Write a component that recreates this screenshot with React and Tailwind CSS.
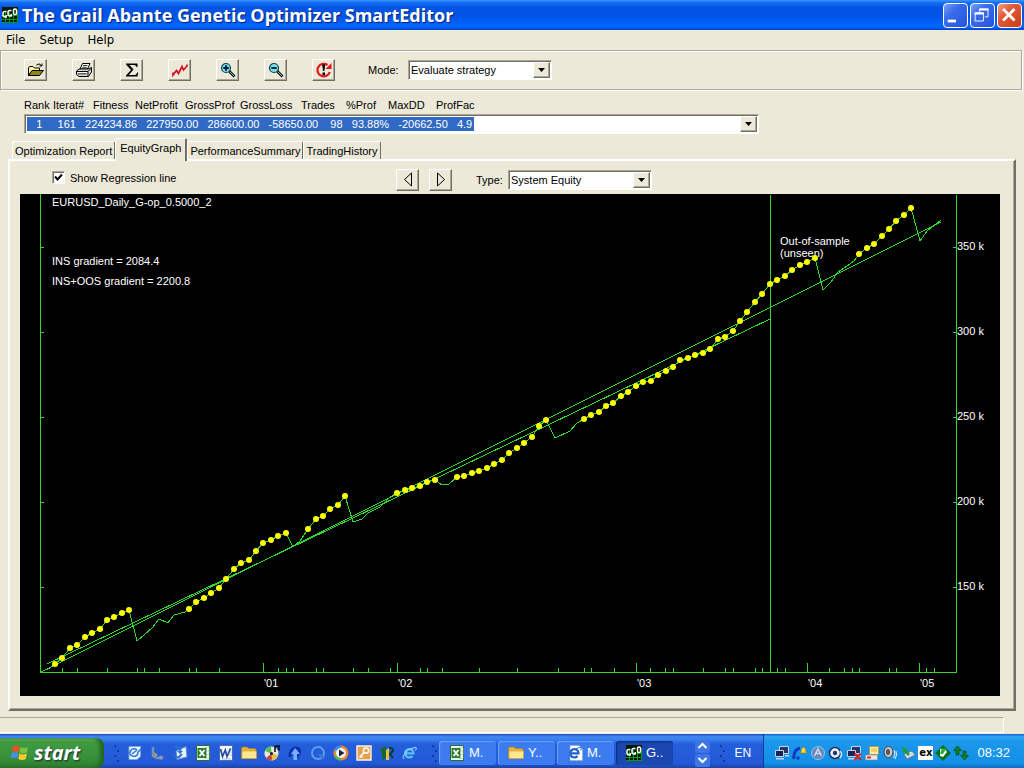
import React, { useState } from "react";

const RAISED =
  "border border-t-white border-l-white border-r-[#716f64] border-b-[#716f64] shadow-[inset_-1px_-1px_0_#aca899]";
const SUNKEN =
  "border border-t-[#aca899] border-l-[#aca899] border-r-white border-b-white shadow-[inset_1px_1px_0_#716f64]";

/* ---------- equity data: [x, y, marked] ---------- */
const EQUITY = [
  [47, 670, 0], [55, 664, 1], [62, 658, 1], [70, 648, 1], [77, 645, 1], [85, 637, 1], [92, 633, 1],
  [100, 629, 1], [107, 620, 1], [114, 617, 1], [122, 613, 1], [129, 610, 1], [137, 641, 0],
  [152, 628, 0], [159, 619, 0], [168, 623, 0], [174, 615, 0], [185, 612, 0], [189, 609, 1],
  [196, 602, 1], [204, 598, 1], [211, 593, 1], [219, 588, 1], [226, 579, 1], [234, 569, 1],
  [241, 563, 1], [249, 560, 1], [256, 551, 1], [263, 543, 1], [271, 540, 1], [278, 536, 1],
  [286, 533, 1], [293, 547, 0], [300, 541, 0], [308, 529, 1], [316, 519, 1], [323, 516, 1],
  [330, 509, 1], [338, 505, 1], [345, 496, 1], [353, 522, 0], [362, 519, 0], [368, 513, 0],
  [380, 507, 0], [390, 497, 0], [397, 493, 1], [405, 490, 1], [412, 488, 1], [420, 486, 1],
  [427, 482, 1], [435, 480, 1], [442, 485, 0], [449, 484, 0], [457, 477, 1], [464, 476, 1],
  [472, 473, 1], [479, 471, 1], [487, 468, 1], [494, 464, 1], [502, 460, 1], [509, 453, 1],
  [517, 448, 1], [524, 443, 1], [532, 437, 1], [539, 426, 1], [546, 420, 1], [555, 438, 0],
  [570, 431, 0], [577, 423, 0], [584, 419, 1], [591, 415, 1], [599, 412, 1], [606, 406, 1],
  [613, 403, 1], [621, 396, 1], [628, 392, 1], [636, 386, 1], [643, 382, 1], [651, 381, 1],
  [658, 375, 1], [666, 371, 1], [673, 367, 1], [680, 360, 1], [688, 358, 1], [695, 355, 1],
  [703, 353, 1], [710, 349, 1], [718, 339, 1], [725, 337, 1], [733, 331, 1], [740, 321, 1],
  [747, 312, 1], [755, 302, 1], [762, 294, 1], [770, 284, 1], [777, 280, 1], [785, 276, 1],
  [792, 270, 1], [800, 265, 1], [807, 262, 1], [815, 258, 1], [823, 290, 0], [831, 282, 0],
  [838, 272, 0], [847, 266, 0], [854, 261, 0], [859, 254, 1], [867, 248, 1], [874, 244, 1],
  [882, 236, 1], [889, 229, 1], [896, 221, 1], [904, 215, 1], [911, 208, 1], [920, 241, 0],
  [927, 231, 0], [941, 220, 0],
];
const MINOR = [
  62, 77, 107, 137, 144, 159, 189, 196, 219, 278, 286, 293, 316, 323, 353, 368, 390, 420, 427, 442,
  479, 517, 558, 584, 591, 614, 650, 665, 673, 703, 725, 733, 755, 762, 777, 785, 829, 844, 852,
  859, 889, 896, 926, 934,
];
const YEARS = [[263, "'01"], [397, "'02"], [636, "'03"], [807, "'04"], [919, "'05"]];
const LEVELS = [[247, "350 k"], [332, "300 k"], [417, "250 k"], [502, "200 k"], [587, "150 k"]];

function EquityChart({ regression }) {
  return (
    <svg
      viewBox="20 194 980 502"
      className="block h-auto w-full bg-black text-[11px]"
      role="img"
      aria-label="System equity graph"
    >
      <g stroke="#32d832" fill="none" shapeRendering="crispEdges" strokeWidth="1">
        <path d="M40.5 194V672.5H956.5V195M770.5 195V672" />
        {MINOR.map((x) => (
          <path key={x} d={`M${x}.5 668V672`} />
        ))}
        {YEARS.map(([x]) => (
          <path key={x} d={`M${x}.5 663V672`} />
        ))}
        {LEVELS.map(([y]) => (
          <path key={y} d={`M41 ${y}.5H44M953 ${y}.5H957`} />
        ))}
        {regression && <path d="M41 672L941 222M47 664L770 319" />}
        <polyline points={EQUITY.map(([x, y]) => `${x},${y}`).join(" ")} />
      </g>
      <g fill="#fff">
        <text x="52" y="206">EURUSD_Daily_G-op_0.5000_2</text>
        <text x="52" y="265">INS gradient = 2084.4</text>
        <text x="52" y="285">INS+OOS gradient = 2200.8</text>
        <text x="780" y="245">Out-of-sample</text>
        <text x="780" y="257">(unseen)</text>
        {LEVELS.map(([y, label]) => (
          <text key={label} x="957" y={y + 3}>{label}</text>
        ))}
        {YEARS.map(([x, label]) => (
          <text key={label} x={x + 1} y="687">{label}</text>
        ))}
      </g>
      <g fill="#ffff00">
        {EQUITY.filter((p) => p[2]).map(([x, y]) => (
          <circle key={x} cx={x} cy={y} r="3" />
        ))}
      </g>
    </svg>
  );
}

/* ---------- drawings ---------- */
function Ico({ children, size = "size-4", box = "0 0 16 16" }) {
  return (
    <svg viewBox={box} className={`${size} shrink-0`} aria-hidden="true">
      {children}
    </svg>
  );
}

const GopIcon = () => (
  <Ico>
    <path fill="#001a00" d="M0 0h16v16H0z" />
    <path stroke="#0a9a1a" strokeWidth="1" d="M0 8.500h16M0 12.500h16M0 15.500h16M3.500 5v11M7.500 5v11M11.500 5v11M15.500 3v13" />
    <g fill="none" stroke="#fff" strokeWidth="1.500">
      <path d="M4.500 4.500H2.500Q1 4.500 1 6.500V8Q1 10 3 10H4.200V8" />
      <path d="M9.500 3.500H7.500Q6 3.500 6 5.500V7Q6 9 8 9H9.200V7" />
      <rect x="11.500" y="2" width="3" height="5.500" rx="1.300" />
    </g>
  </Ico>
);

const OpenIcon = () => (
  <Ico size="h-4 w-[18px]" box="0 0 18 16">
    <path fill="#fff29a" stroke="#000" d="M1.500 13.500V5.500L3 4.500H6L7.500 6H12.500V8.500H5.500z" />
    <path fill="#8a8a12" stroke="#000" d="M1.500 13.500L5 8.500H16.500L12.500 13.500z" />
    <path fill="none" stroke="#000" d="M9.500 3Q12 .5 14.500 3.500M15 1.500V4H12.500" />
  </Ico>
);
const PrintIcon = () => (
  <Ico size="h-4 w-[18px]" box="0 0 18 16">
    <path fill="#fff" stroke="#000" d="M5 7L7.500 1.500H15L12.500 7z" />
    <path stroke="#000" strokeWidth=".8" d="M8 3.500H12.500M7.200 5.300H11.700" />
    <path fill="#d8d8d0" stroke="#000" d="M1.500 9L4 7H13L16.500 5.500V10L13.500 14.500H4L1.500 12.500z" />
    <path stroke="#000" fill="none" d="M1.500 9.500H13L16 6.500M13 9.500V14M3 11.800H11.500" />
    <path stroke="#fff" d="M3 10.700H12" />
  </Ico>
);
const SigmaIcon = () => (
  <Ico size="h-4 w-[18px]" box="0 0 18 16">
    <path fill="#000" d="M3 1.500H14.500V5H13.500Q13 3 11 3H6.500L10.500 7.500L5.800 13H11.500Q13.500 13 14.200 10.500H15.200L14.500 14.500H3V13.500L8 8L3 2.500z" />
  </Ico>
);
const ZigIcon = () => (
  <Ico size="h-4 w-[18px]" box="0 0 18 16">
    <path fill="none" stroke="#d01020" strokeWidth="1.700" d="M2 10.500V13L5.500 8.500L7.500 11.500L11 4.500L12.500 8L16 4V2.500" />
  </Ico>
);
const ZoomIcon = ({ plus }) => (
  <Ico size="h-4 w-[18px]" box="0 0 18 16">
    <path stroke="#000" strokeWidth="2.600" d="M10 9L15.500 14.500" />
    <path stroke="#5ad0c8" strokeWidth="1" d="M10.500 9.500L15 14" />
    <circle cx="7" cy="6" r="4.500" fill="#6fe3df" stroke="#1c3a4a" strokeWidth="1.200" />
    <path stroke="#00104a" strokeWidth="1.800" d={plus ? "M4.300 6H9.700M7 3.300V8.700" : "M4.300 6H9.700"} />
  </Ico>
);
const RunIcon = () => (
  <Ico size="h-4 w-[18px]" box="0 0 18 16">
    <path fill="none" stroke="#e01818" strokeWidth="2.200" d="M12.500 3A6.300 6.300 0 1 0 14.800 10" />
    <path fill="#e01818" d="M16.500 1V7H10.500z" />
    <path fill="#000" d="M7.200 2.500H10.200L9.400 9H8zM7.500 10.500H10V13H7.500z" />
  </Ico>
);

const Excel = () => (
  <Ico>
    <path fill="#e8f4e4" stroke="#2f6b35" d="M1.500 .5h13v15h-13z" />
    <path fill="#fff" stroke="#9fc49f" strokeWidth=".6" d="M10 2.500h4v11h-4zM10 6h4M10 9.500h4" />
    <path fill="#2e7d3a" d="M2.500 3h9v10h-9z" />
    <path stroke="#fff" strokeWidth="1.800" d="M4.500 5L9.500 11M9.500 5L4.500 11" />
  </Ico>
);
const Word = () => (
  <Ico>
    <path fill="#f2f6ff" stroke="#4a6cb0" d="M1.500 .5h13v15h-13z" />
    <path stroke="#9ab" strokeWidth=".7" d="M11 4h3M11 7h3M11 10h3M4 14h9" />
    <path fill="none" stroke="#24489c" strokeWidth="1.700" d="M2.500 4L4.500 11.500L7.300 5L9 11.500L12.500 3.500" />
  </Ico>
);
const Folder = () => (
  <Ico>
    <path fill="#e8b43c" stroke="#b07c14" strokeWidth=".7" d="M.5 13.500V3L1.500 2H6L7.500 3.500H14L15 4.500V13.500z" />
    <path fill="#ffe890" stroke="#c89828" strokeWidth=".6" d="M1 6H15.500V13.500H1z" />
  </Ico>
);
const IE = ({ page }) => (
  <Ico>
    {page && <path fill="#fff" stroke="#8aa" strokeWidth=".6" d="M3 .5h9L15.500 4V15.500H3z" />}
    <path fill="none" stroke={page ? "#2060c8" : "#5cc0f8"} strokeWidth="2.200" d="M4 8.300H11.500A4.200 4.200 0 1 0 10.500 11" />
    <path fill="none" stroke={page ? "#2a78d8" : "#a8e0ff"} strokeWidth="1" d="M2.500 13.500Q-.5 14 2.500 9T13 2.500Q15.500 2 13.500 5.500" />
  </Ico>
);
const OutlookExpress = () => (
  <Ico>
    <path fill="#eef6ff" stroke="#7aa6d8" d="M3 1.500H14.500V11.500L11 14.500H3z" />
    <path fill="none" stroke="#2a7ad0" strokeWidth="1.600" d="M11 5Q7 2 4.500 6T8 11.500Q12 11 12 7L15 4M6 9L11 5" />
  </Ico>
);
const Tool = () => (
  <Ico>
    <path stroke="#7d90b8" strokeWidth="2.500" fill="none" d="M4 2V11L8 13H14" />
    <path fill="#b4a468" d="M5 7L9 10L6 12z" />
    <circle cx="12" cy="12.500" r="2" fill="#8c9ac0" />
  </Ico>
);
const Sync = () => (
  <Ico>
    <path fill="#e6f2ff" stroke="#5a8cc8" d="M4 6L14 1.500L15 12L5 14.500z" />
    <path fill="none" stroke="#2672d4" strokeWidth="2" d="M3 3Q6 .5 8.500 3.500L8 7M1 9Q2 13 7 12L10 9" />
    <path fill="#2672d4" d="M5 6H11L8 9z" />
  </Ico>
);
const Disc = () => (
  <Ico>
    <circle cx="7.500" cy="8.500" r="7" fill="#e8ece0" />
    <path fill="#58c050" d="M7.500 8.500L1 6Q3 1.500 7 1.500z" />
    <path fill="#e8c040" d="M7.500 8.500L14 10Q12 15 8 15.500z" />
    <path fill="#c04838" d="M7.500 8.500L2 13Q4 15.500 8 15.500z" />
    <circle cx="7.500" cy="8.500" r="1.600" fill="#223" />
    <path fill="none" stroke="#111" strokeWidth="1.600" d="M11 7V1.500L15 1V5.500" />
  </Ico>
);
const BlueArrow = () => (
  <Ico>
    <path fill="none" stroke="#0c2fb0" strokeWidth="3" d="M3 12Q3 4 9 3Q13 3 12.500 8L10 12" />
    <path fill="#78b0ff" d="M8 3L13 9H10V15H6.500V9H4z" />
  </Ico>
);
const QuickTime = () => (
  <Ico>
    <circle cx="8" cy="8" r="6" fill="none" stroke="#58a0e8" strokeWidth="2" />
    <path stroke="#3a78d0" strokeWidth="2.500" d="M9 9L14 14" />
  </Ico>
);
const MediaPlayer = () => (
  <Ico>
    <circle cx="8" cy="8" r="7.500" fill="#f08828" />
    <path fill="#3c8cf0" d="M8 8L1 5A7.500 7.500 0 0 1 8 .5z" />
    <path fill="#58b848" d="M8 8L1 11A7.500 7.500 0 0 0 8 15.500z" />
    <circle cx="8" cy="8" r="5" fill="#f4f6fa" />
    <path fill="#182038" d="M6 4.500L11.500 8L6 11.500z" />
  </Ico>
);
const KeyIcon = () => (
  <Ico>
    <path fill="#e8a050" stroke="#fff4dc" strokeWidth="1.400" d="M1 1h14v14H1z" />
    <circle cx="10" cy="5.500" r="2.600" fill="none" stroke="#fff" strokeWidth="1.500" />
    <path stroke="#fff" strokeWidth="1.600" d="M8 7.500L3.500 12.500M5 11L6.500 12.500" />
  </Ico>
);
const Runner = () => (
  <Ico>
    <path fill="#18682c" d="M1 4L7 1V13L3 15V8z" />
    <path fill="#e8c048" d="M7 5L10 3V15H7z" />
    <path fill="none" stroke="#0c3c2c" strokeWidth="2" d="M10 3Q14 2 14 6L11 9L14 13" />
  </Ico>
);
const QUICK = [OutlookExpress, Tool, Sync, Excel, Word, Folder, Disc, BlueArrow, QuickTime, MediaPlayer, KeyIcon, Runner, IE];
const QUICK_NAMES = ["Mail", "Tools", "Sync", "Excel", "Word", "Folder", "Disc", "Upload", "QuickTime", "Media Player", "Keys", "Runner", "Internet Explorer"];

const Monitors = ({ off }) => (
  <Ico>
    <path fill="#26366e" stroke="#c8d4ec" d="M5.500 1.500h9v7h-9z" />
    <path fill="#1a2450" stroke="#c8d4ec" d="M1.500 5.500h8v6h-8z" />
    <path fill="#c8d4ec" d="M2 13h8v1.500H2zM11 10h4v1.500h-4z" />
    {off && <path stroke="#e02020" strokeWidth="2" d="M8.500 8.500L15 15M15 8.500L8.500 15" />}
  </Ico>
);
const TRAY = [
  <Monitors />,
  <Ico>
    <path fill="none" stroke="#1038c0" strokeWidth="3" d="M2 14Q1 5 8 3" />
    <path fill="#ffdc28" stroke="#a07800" strokeWidth=".6" d="M8 8Q9.500 7 9.500 4Q11.500 .5 13.500 4Q13.500 7 15 8z" />
    <circle cx="6" cy="13" r="1.800" fill="#1038c0" />
  </Ico>,
  <Ico>
    <circle cx="8" cy="8" r="6.500" fill="#6888b8" stroke="#9cc0e8" />
    <path fill="none" stroke="#c8dcf4" strokeWidth="1.500" d="M4.500 11L8 4L11.500 11M5 8.500H11" />
  </Ico>,
  <Ico>
    <circle cx="7" cy="8" r="5.500" fill="#e8f0fc" stroke="#18305c" strokeWidth="1.500" />
    <circle cx="7" cy="8" r="2.200" fill="#1c3870" />
    <path fill="none" stroke="#d8e6fa" strokeWidth="1.500" d="M12 6Q15 9 12 13" />
  </Ico>,
  <Monitors off />,
  <Ico>
    <path fill="#fff0b0" stroke="#b09850" d="M5.500 1.500h9v8h-9z" />
    <path fill="#f4d060" d="M7 3h6v4H7z" />
    <path fill="#e4e8f0" stroke="#888" strokeWidth=".6" d="M1.500 10h12v5h-12z" />
    <path fill="#e03020" d="M3 11.500h4v2H3z" />
  </Ico>,
  <Ico>
    <ellipse cx="6.500" cy="7" rx="4.500" ry="5.500" fill="#c8c8c8" stroke="#444" />
    <ellipse cx="6" cy="7" rx="2" ry="3" fill="#555" />
    <path fill="none" stroke="#e8f0ff" d="M12 5Q14 9 11.500 13M14 6Q15.500 10 13 14" />
  </Ico>,
  <Ico>
    <path fill="#d8dce0" stroke="#667" strokeWidth=".7" d="M4 9L12 6L15 10L7 14z" />
    <path fill="#18a038" d="M2 2L8 4L6.500 5.500L10 9L8 11L4.500 7L3 8z" />
  </Ico>,
  <span className="bg-white px-px font-['DejaVu_Sans'] text-[10px] leading-[14px] font-bold text-black">ex</span>,
  <Ico>
    <path fill="#087018" d="M8 0L16 8L8 16L0 8z" />
    <path fill="#fff" d="M5 4H10L12 7L8 12L5 11z" />
    <path fill="#20b040" d="M7 3L11 4L8 9L5 9z" />
  </Ico>,
  <Ico>
    <path fill="#10801c" stroke="#043c08" strokeWidth=".6" d="M4.500 1L8.500 5.500H6V10H3V5.500H.5zM11.500 15L7.500 10.500H10V6H13V10.500H15.500z" />
  </Ico>,
];

const WindowsFlag = () => (
  <Ico size="size-5" box="0 0 20 20">
    <path fill="#e8532c" d="M3 3.500Q6 1.500 9.500 3.500L8.500 9Q5 7.300 2 9z" />
    <path fill="#7cc242" d="M10.500 4Q14 6 18 4L17 9.500Q13.500 11.200 9.500 9.500z" />
    <path fill="#4a8ff0" d="M1.800 10Q5 8.300 8.300 10L7.300 15.500Q4 13.700 .8 15.500z" />
    <path fill="#ffcb2d" d="M9.300 10.500Q13 12.300 16.800 10.500L15.800 16Q12 18 8.300 16z" />
  </Ico>
);

/* ---------- controls ---------- */
function DropArrow() {
  return (
    <span
      className={`pointer-events-none absolute inset-y-[2px] right-[2px] flex w-[17px] items-center justify-center bg-[#ece9d8] ${RAISED}`}
    >
      <svg viewBox="0 0 7 4" className="h-1 w-[7px]" aria-hidden="true">
        <path d="M0 0H7L3.500 4z" />
      </svg>
    </span>
  );
}

function Combo({ id, options }) {
  return (
    <span className="relative block w-36">
      <select id={id} className={`h-5 w-full appearance-none bg-white pr-5 pl-0.5 ${SUNKEN}`}>
        {options.map((o) => (
          <option key={o}>{o}</option>
        ))}
      </select>
      <DropArrow />
    </span>
  );
}

const TOOLS = [
  ["Open", <OpenIcon />],
  ["Print", <PrintIcon />],
  ["Sum", <SigmaIcon />],
  ["Chart", <ZigIcon />],
  ["Zoom in", <ZoomIcon plus />],
  ["Zoom out", <ZoomIcon />],
  ["Run", <RunIcon />],
];
const COLUMNS = ["Rank", "Iterat#", "Fitness", "NetProfit", "GrossProf", "GrossLoss", "Trades", "%Prof", "MaxDD", "ProfFac"];
const sp = (n) => "\u00a0".repeat(n);
const ROW =
  sp(3) + "1" + sp(5) + "161" + sp(3) + "224234.86" + sp(3) + "227950.00" + sp(3) + "286600.00" + sp(3) +
  "-58650.00" + sp(4) + "98" + sp(3) + "93.88%" + sp(3) + "-20662.50" + sp(3) + "4.9";
const TABS = ["Optimization Report", "EquityGraph", "PerformanceSummary", "TradingHistory"];

const CAPTION = "flex size-[25px] items-center justify-center rounded-[4px] border border-white";

function Grip() {
  return (
    <span className="grid grid-cols-2 gap-x-px gap-y-[3px]" aria-hidden="true">
      {[0, 1, 2, 3, 4, 5, 6, 7].map((i) => (
        <span key={i} className={`size-[2px] ${i % 4 === 0 || i % 4 === 3 ? "bg-[#123a9c]" : "bg-transparent"}`} />
      ))}
    </span>
  );
}

export default function App() {
  const [regression, setRegression] = useState(true);
  const [tab, setTab] = useState("EquityGraph");
  return (
    <div className="flex min-h-screen flex-col bg-[#ece9d8] font-['Liberation_Sans',sans-serif] text-[11px] leading-4 text-black">
      <header className="flex h-[30px] items-center gap-1 bg-[linear-gradient(#3a96ff_0,#1670f4_8%,#0454e2_25%,#0254e6_55%,#0366ff_85%,#0560f8_92%,#0242c8)] pr-[2px] pl-[2px]">
        <GopIcon />
        <h1 className="flex-1 truncate font-['Open_Sans',sans-serif] text-[18px] leading-[26px] font-bold text-white [text-shadow:1px_1px_1px_#0a1f78]">
          The Grail Abante Genetic Optimizer SmartEditor
        </h1>
        <div className="flex gap-[2px]">
          <button aria-label="Minimize" className={`${CAPTION} bg-[linear-gradient(135deg,#7ea2f4,#3a6cec_35%,#2454dc)]`}>
            <svg viewBox="0 0 25 25" className="size-full"><path fill="#fff" d="M4 17h9v3H4z" /></svg>
          </button>
          <button aria-label="Restore" className={`${CAPTION} bg-[linear-gradient(135deg,#7ea2f4,#3a6cec_35%,#2454dc)]`}>
            <svg viewBox="0 0 25 25" className="size-full" fill="none" stroke="#fff">
              <path d="M9.500 9V5.500H18.500V14H15M4.500 9.500H13.500V18.500H4.500z" />
              <path strokeWidth="2" d="M9 6H19M4 10.500H14" />
            </svg>
          </button>
          <button aria-label="Close" className={`${CAPTION} bg-[linear-gradient(135deg,#f0a48c,#e25c3a_35%,#cc3a14)]`}>
            <svg viewBox="0 0 25 25" className="size-full" stroke="#fff" strokeWidth="3"><path d="M5.500 5.500L18 18M18 5.500L5.500 18" /></svg>
          </button>
        </div>
      </header>

      <nav className="flex h-5 items-center gap-3.5 pl-1.5 font-['DejaVu_Sans_Condensed','Noto_Sans',sans-serif] text-[13px]">
        <button>File</button>
        <button>Setup</button>
        <button>Help</button>
      </nav>

      <div className="mr-[2px] flex h-10 items-center border border-[#aca899] pl-[23px] shadow-[inset_1px_1px_0_#fff,1px_1px_0_#fff]">
        <div className="flex gap-[25px]">
          {TOOLS.map(([name, icon]) => (
            <button key={name} aria-label={name} className={`flex h-[22px] w-[23px] items-center justify-center ${RAISED}`}>
              {icon}
            </button>
          ))}
        </div>
        <label htmlFor="mode" className="ml-[33px] w-10">Mode:</label>
        <Combo id="mode" options={["Evaluate strategy", "Optimize strategy"]} />
      </div>

      <section className="mt-[7px] px-6">
        <label
          htmlFor="result"
          className="grid h-[17px] grid-cols-[29px_40px_42px_50px_55px_61px_45px_42px_48px_auto] whitespace-nowrap"
        >
          {COLUMNS.map((c) => (
            <span key={c}>{c}</span>
          ))}
        </label>
        <div className="relative w-[735px] max-w-full">
          <select
            id="result"
            className={`h-5 w-full appearance-none bg-white bg-[linear-gradient(#316ac5,#316ac5)] bg-[length:447px_14px] bg-[position:2px_2px] bg-no-repeat pr-5 pl-[2px] text-white ${SUNKEN}`}
          >
            <option>{ROW}</option>
          </select>
          <DropArrow />
        </div>
      </section>

      <main className="mt-1 mr-2 ml-2 flex flex-col">
        <div role="tablist" className="z-10 flex items-end pl-1">
          {TABS.map((t) => (
            <button
              key={t}
              role="tab"
              aria-selected={t === tab}
              onClick={() => setTab(t)}
              className={`rounded-t-[2px] border-t border-l border-t-white border-r-[#716f64] border-l-white bg-[#ece9d8] ${
                t === tab ? "-mb-[2px] h-[23px] border-r-2 px-1 pb-1" : "h-[18px] border-r px-[2px]"
              }`}
            >
              {t}
            </button>
          ))}
        </div>
        <div className="border-2 border-t-white border-r-[#716f64] border-b-[#716f64] border-l-white px-[10px] pb-[13px] shadow-[inset_-1px_-1px_0_#aca899]">
          <div className="flex h-[33px] items-center pt-1 pl-8">
            <div className="flex w-[344px] items-center gap-[5px] pb-1">
              <span className="relative flex size-[13px]">
                <input
                  id="regression"
                  type="checkbox"
                  checked={regression}
                  onChange={(e) => setRegression(e.target.checked)}
                  className={`peer size-[13px] appearance-none bg-white ${SUNKEN}`}
                />
                <svg
                  viewBox="0 0 13 13"
                  className="pointer-events-none invisible absolute inset-0 size-[13px] peer-checked:visible"
                  aria-hidden="true"
                >
                  <path fill="none" stroke="#000" strokeWidth="2" d="M3 5.500L5.500 8.500L10 3.500" />
                </svg>
              </span>
              <label htmlFor="regression">Show Regression line</label>
            </div>
            <div className="flex gap-[10px]">
              {[["Previous", "M9.500 1V14L2.500 7.500z"], ["Next", "M2.500 1V14L9.500 7.500z"]].map(([name, d]) => (
                <button key={name} aria-label={name} className={`flex h-[22px] w-[23px] items-center justify-center ${RAISED}`}>
                  <svg viewBox="0 0 12 15" className="h-[15px] w-3" fill="none" stroke="#000" aria-hidden="true">
                    <path d={d} />
                  </svg>
                </button>
              ))}
            </div>
            <label htmlFor="type" className="ml-6 w-8">Type:</label>
            <Combo id="type" options={["System Equity", "Closed Equity"]} />
          </div>
          <div className="mr-1">
            <EquityChart regression={regression} />
          </div>
        </div>
      </main>

      <footer className="mt-1.5 mr-5 mb-px min-h-4 flex-1 border-t border-r border-b border-t-[#aca899] border-r-white border-b-white" />

      <div className="flex h-[34px] items-stretch bg-[linear-gradient(#1f4fc0_0,#3f88f0_8%,#3a80f0_16%,#245edb_30%,#2359d8_85%,#1a45a8)] font-['Liberation_Sans',sans-serif] text-[13px] text-white">
        <button className="mt-1 flex w-[104px] items-center gap-1 rounded-r-lg bg-[linear-gradient(#6cb86a_0,#3f9a3f_15%,#3a933b_60%,#2c7d2e)] pl-2.5 font-['Open_Sans',sans-serif] text-[20px] leading-6 font-bold italic shadow-[inset_-4px_0_4px_#1f6424] [text-shadow:1px_1px_2px_#123]">
          <WindowsFlag />
          start
        </button>
        <div className="flex items-center gap-[7px] pt-1 pl-2.5">
          <Grip />
          {QUICK.map((Q, i) => (
            <button key={QUICK_NAMES[i]} aria-label={QUICK_NAMES[i]}>
              <Q />
            </button>
          ))}
        </div>
        <div className="flex flex-1 items-center gap-[2px] pt-1 pl-3.5">
          <Grip />
          {[["M.", <Excel />], ["Y..", <Folder />], ["M.", <IE page />], ["G..", <GopIcon />]].map(([t, icon], i) => (
            <button
              key={i}
              className={`flex h-6 w-[57px] items-center gap-1 rounded-[3px] pl-2.5 ${
                i === 3 ? "bg-[#1a48b0] shadow-[inset_1px_1px_2px_#0c2c7c]" : "bg-[#3c7cf0] shadow-[inset_1px_1px_1px_#6ca4ff]"
              }`}
            >
              {icon}
              {t}
            </button>
          ))}
        </div>
        <div className="flex items-center gap-2.5 pt-1 pr-3">
          <div className="flex flex-col gap-px">
            {["M1.500 6L5.500 2L9.500 6", "M1.500 2L5.500 6L9.500 2"].map((d, i) => (
              <button key={d} aria-label={i ? "Scroll down" : "Scroll up"} className="flex h-[13px] w-[15px] items-center justify-center rounded-[2px] bg-[#3f74e4]">
                <svg viewBox="0 0 11 8" className="h-2 w-[11px]" fill="none" stroke="#fff" strokeWidth="2"><path d={d} /></svg>
              </button>
            ))}
          </div>
          <Grip />
          <span className="text-[12px]">EN</span>
        </div>
        <div className="flex items-center gap-[2px] border-l border-[#0c3c98] bg-[linear-gradient(#1660c8_0,#30a8f4_8%,#1c98ec_20%,#1290e8_85%,#0f6cc0)] pt-1 pr-3.5 pl-2.5">
          {TRAY.map((icon, i) => (
            <React.Fragment key={i}>{icon}</React.Fragment>
          ))}
          <time className="pl-1.5">08:32</time>
        </div>
      </div>
    </div>
  );
}
